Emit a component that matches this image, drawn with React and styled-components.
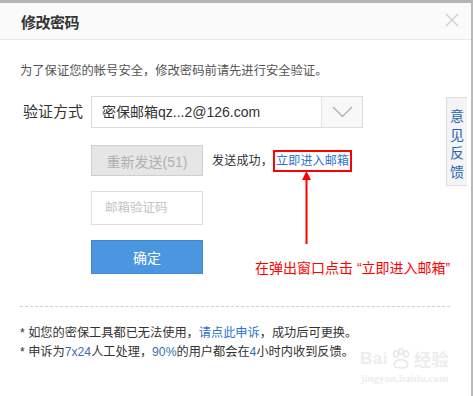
import React from "react";
import styled, { createGlobalStyle } from "styled-components";

const GlobalStyle = createGlobalStyle`
  html, body {
    margin: 0;
    padding: 0;
    background: #fff;
  }
  body {
    font-family: "Liberation Sans", "Noto Sans CJK SC", sans-serif;
    color: #333;
  }
`;

const Dialog = styled.div`
  position: relative;
  width: 471px;
  height: 393px;
  border-top: 3px solid #b4b4b4;
  border-right: 2px solid #b9b9b9;
  background: #fff;
  overflow: hidden;
`;

const Header = styled.div`
  display: flex;
  align-items: center;
  justify-content: space-between;
  height: 36px;
  padding: 0 12px 0 21px;
  background: #fafafa;
  border-bottom: 1px solid #e8e8e8;
`;

const Title = styled.h1`
  margin: 0;
  font-size: 15px;
  font-weight: bold;
  color: #333;
  letter-spacing: -0.5px;
`;

const CloseButton = styled.button`
  display: flex;
  padding: 0;
  margin-top: -3px;
  border: none;
  background: none;
  cursor: pointer;
`;

const Body = styled.div`
  position: relative;
  z-index: 1;
  padding: 22px 20px 0 20px;
`;

const Intro = styled.p`
  margin: 0;
  font-size: 12.3px;
  line-height: 18px;
  color: #555;
`;

const Form = styled.div`
  display: grid;
  grid-template-columns: 71px 272px;
  margin-top: 16px;
`;

const Label = styled.div`
  padding-left: 3px;
  font-size: 15px;
  line-height: 32px;
  color: #333;
`;

const Field = styled.div`
  grid-column: 2;
  display: flex;
  align-items: center;
  margin-top: ${(p) => p.$top || 0}px;
`;

const Select = styled.div`
  display: flex;
  width: 272px;
  height: 32px;
  box-sizing: border-box;
  border: 1px solid #dcdcdc;
`;

const SelectValue = styled.div`
  flex: 1;
  padding-left: 10px;
  font-size: 14px;
  line-height: 30px;
  color: #333;
  border-right: 1px solid #e4e4e4;
`;

const SelectArrow = styled.div`
  display: flex;
  align-items: center;
  justify-content: center;
  width: 40px;
  background: #f8f8f8;
`;

const Button = styled.button`
  width: 112px;
  height: ${(p) => (p.$primary ? 34 : 31)}px;
  box-sizing: border-box;
  padding: 0;
  font-family: inherit;
  font-size: 14px;
  color: ${(p) => (p.$primary ? "#fff" : "#b0b0b0")};
  background: ${(p) => (p.$primary ? "#4a97e0" : "#e6e6e6")};
  border: 1px solid ${(p) => (p.$primary ? "#3f88d2" : "#cfcfcf")};
  cursor: ${(p) => (p.$primary ? "pointer" : "default")};
`;

const Status = styled.span`
  margin-left: 9px;
  font-size: 12px;
  letter-spacing: 0.2px;
  color: #333;
`;

const MailLink = styled.a`
  display: inline-block;
  padding: 2px 1px;
  color: #2b73cf;
  text-decoration: none;
  border: 2px solid #f00;
  line-height: 14px;
`;

const CodeInput = styled.input`
  width: 112px;
  height: 34px;
  box-sizing: border-box;
  padding: 0 0 0 13px;
  font-family: inherit;
  font-size: 12.5px;
  color: #333;
  border: 1px solid #dedede;
  outline: none;
  &::placeholder {
    color: #c4c4c4;
  }
`;

const Divider = styled.hr`
  margin: 32px 0 0 0;
  width: 430px;
  border: none;
  border-top: 1px dashed #cfcfcf;
`;

const Notes = styled.div`
  margin-top: 17px;
  font-size: 12.2px;
  line-height: 19px;
  color: #333;
`;

const Note = styled.p`
  margin: 0;
`;

const Blue = styled.span`
  color: ${(p) => (p.$num ? "#3a6fae" : "#2b73cf")};
`;

const FeedbackTab = styled.a`
  position: absolute;
  top: 94px;
  right: 4px;
  display: flex;
  flex-direction: column;
  align-items: center;
  width: 20px;
  padding: 9px 0 4px;
  font-size: 14px;
  line-height: 18.5px;
  color: #2864b4;
  background: #f4f4f4;
  border: 1px solid #dcdcdc;
  border-right: none;
  text-decoration: none;
`;

const Annotation = styled.div`
  position: absolute;
  left: 255px;
  top: 165px;
  z-index: 2;
  display: flex;
  flex-direction: column;
`;

const AnnotationText = styled.div`
  margin-top: 14px;
  font-size: 14px;
  line-height: 18px;
  color: #f00;
  white-space: nowrap;
`;

const Watermark = styled.div`
  position: absolute;
  left: 360px;
  top: 343px;
  display: flex;
  flex-direction: column;
  align-items: center;
  color: #ededed;
  pointer-events: none;
`;

const WatermarkBrand = styled.div`
  display: flex;
  align-items: center;
  gap: 2px;
  font-size: 17px;
  font-weight: bold;
  letter-spacing: 0.5px;
`;

const WatermarkUrl = styled.div`
  margin-top: 1px;
  font-family: "Liberation Serif", serif;
  font-size: 11px;
  font-weight: bold;
`;

function CloseIcon() {
  return (
    <svg width="14" height="14" viewBox="0 0 14 14">
      <path d="M1 1 L13 13 M13 1 L1 13" stroke="#cdcdcd" strokeWidth="1.3" fill="none" />
    </svg>
  );
}

function ChevronIcon() {
  return (
    <svg width="21" height="12" viewBox="0 0 21 12">
      <path d="M1 1 L10.5 10.5 L20 1" stroke="#a9a9a9" strokeWidth="1.2" fill="none" />
    </svg>
  );
}

function ArrowUp() {
  return (
    <svg width="104" height="77" viewBox="0 0 104 77">
      <path d="M51.5 3 L56 12 L47 12 Z" fill="#f00" />
      <path d="M51.5 11 L51.5 76" stroke="#f00" strokeWidth="2" />
    </svg>
  );
}

function Paw() {
  return (
    <svg width="22" height="22" viewBox="0 0 22 22">
      <g fill="none" stroke="#e8e8e8" strokeWidth="1.6">
        <ellipse cx="6" cy="6" rx="2.5" ry="3" />
        <ellipse cx="11" cy="3.5" rx="2.3" ry="2.8" />
        <ellipse cx="16" cy="6" rx="2.5" ry="3" />
        <path d="M4 17 C5 10, 17 10, 18 17 C18 21, 4 21, 4 17 Z" />
      </g>
    </svg>
  );
}

export default function App() {
  return (
    <>
      <GlobalStyle />
      <Dialog>
        <Header>
          <Title>修改密码</Title>
          <CloseButton aria-label="关闭">
            <CloseIcon />
          </CloseButton>
        </Header>
        <Watermark>
          <WatermarkBrand>
            <span>Bai</span>
            <Paw />
            <span>经验</span>
          </WatermarkBrand>
          <WatermarkUrl>jingyan.baidu.com</WatermarkUrl>
        </Watermark>
        <Body>
          <Intro>为了保证您的帐号安全，修改密码前请先进行安全验证。</Intro>
          <Form>
            <Label>验证方式</Label>
            <Select>
              <SelectValue>密保邮箱qz...2@126.com</SelectValue>
              <SelectArrow>
                <ChevronIcon />
              </SelectArrow>
            </Select>
            <Field $top={17}>
              <Button disabled>重新发送(51)</Button>
              <Status>
                发送成功，<MailLink href="#">立即进入邮箱</MailLink>
              </Status>
            </Field>
            <Field $top={15}>
              <CodeInput placeholder="邮箱验证码" />
            </Field>
            <Field $top={15}>
              <Button $primary>确定</Button>
            </Field>
          </Form>
          <Divider />
          <Notes>
            <Note>
              * 如您的密保工具都已无法使用，<Blue>请点此申诉</Blue>，成功后可更换。
            </Note>
            <Note>
              * 申诉为<Blue $num>7x24</Blue>人工处理，<Blue $num>90%</Blue>的用户都会在
              <Blue $num>4</Blue>小时内收到反馈。
            </Note>
          </Notes>
        </Body>
        <FeedbackTab href="#">
          <span>意</span>
          <span>见</span>
          <span>反</span>
          <span>馈</span>
        </FeedbackTab>
        <Annotation>
          <ArrowUp />
          <AnnotationText>在弹出窗口点击 “立即进入邮箱”</AnnotationText>
        </Annotation>
      </Dialog>
    </>
  );
}
